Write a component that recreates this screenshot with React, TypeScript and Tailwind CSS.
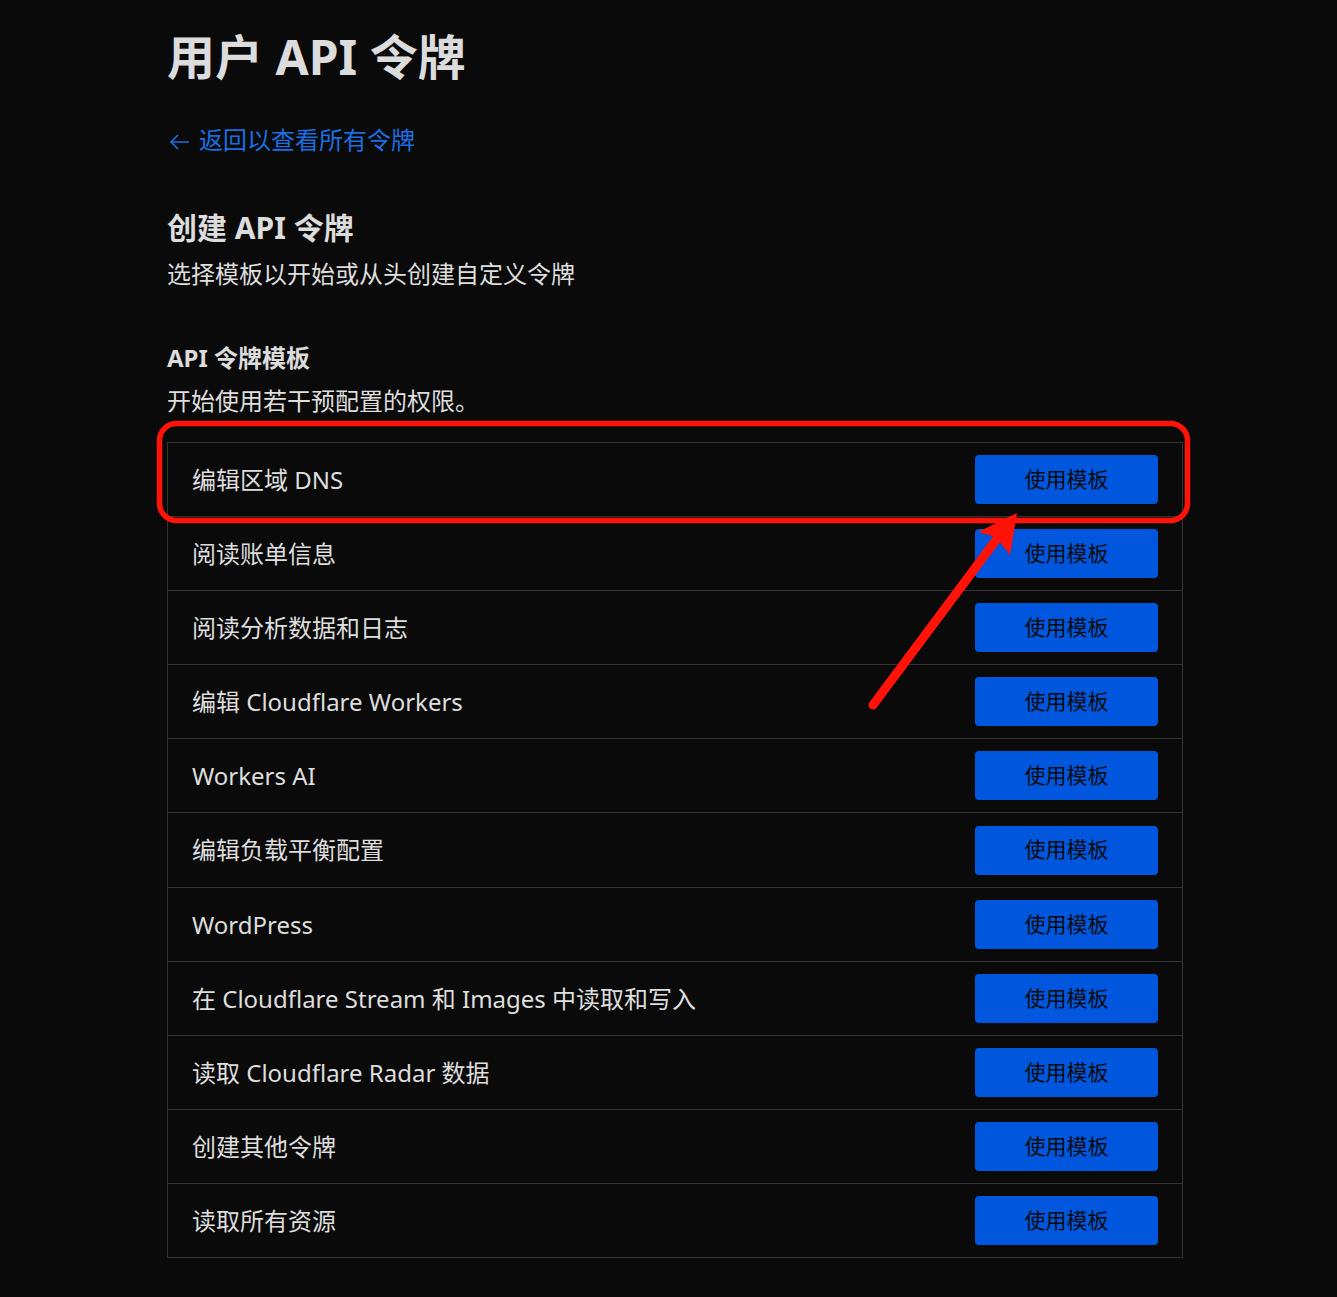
import React from 'react';

const templates = [
  '编辑区域 DNS',
  '阅读账单信息',
  '阅读分析数据和日志',
  '编辑 Cloudflare Workers',
  'Workers AI',
  '编辑负载平衡配置',
  'WordPress',
  '在 Cloudflare Stream 和 Images 中读取和写入',
  '读取 Cloudflare Radar 数据',
  '创建其他令牌',
  '读取所有资源',
];

const font = { fontFamily: '"Noto Sans", "Noto Sans CJK SC", sans-serif' };

export default function App() {
  return (
    <div className="relative min-h-[1297px] w-full bg-[#0a0a0a] text-[#dedede]" style={font}>
      <div className="ml-[167px] w-[1016px] pt-[28px]">
        <h1 className="text-[48px] font-bold leading-[58px] text-[#dcdcdc]">用户 API 令牌</h1>

        <a href="#" className="mt-[38px] flex items-center gap-[9px] text-[24px] leading-[32px] text-[#1c6fe3]">
          <svg width="21" height="18" viewBox="0 0 21 18" fill="none" stroke="currentColor" strokeWidth="1.6" className="ml-[2px] mt-[3px]">
            <path d="M20 9H2M9 2L2 9l7 7" />
          </svg>
          返回以查看所有令牌
        </a>

        <h2 className="mt-[54px] text-[30px] font-bold leading-[36px] text-[#dcdcdc]">创建 API 令牌</h2>
        <p className="mt-[12px] text-[24px] leading-[32px]">选择模板以开始或从头创建自定义令牌</p>

        <h3 className="mt-[52px] text-[24px] font-bold leading-[32px] text-[#dcdcdc]">API 令牌模板</h3>
        <p className="mt-[11px] text-[24px] leading-[32px]">开始使用若干预配置的权限。</p>

        <div className="mt-[25px] border border-[#333333]">
          {templates.map((name, i) => (
            <div
              key={i}
              className={`flex items-center justify-between pl-[24px] pr-[24px] box-content ${i === 5 ? 'h-[74px]' : 'h-[73px]'} ${i < templates.length - 1 ? 'border-b border-[#333333]' : ''}`}
            >
              <span className="text-[24px] leading-[32px] text-[#dedede]">{name}</span>
              <button className="h-[49px] w-[183px] rounded-[4px] bg-[#0056dd] text-[21px] text-[#0a0a0a]">使用模板</button>
            </div>
          ))}
        </div>
      </div>

      {/* annotation */}
      <svg className="pointer-events-none absolute left-0 top-0" width="1337" height="1297" viewBox="0 0 1337 1297" fill="none">
        <rect x="159.5" y="423.5" width="1028" height="97" rx="17" stroke="#ff1208" strokeWidth="5.5" />
        <path d="M873 705L999 536" stroke="#ff1208" strokeWidth="9" strokeLinecap="round" />
        <path d="M1017 513L978 532L996 537L1010 555Z" fill="#ff1208" />
      </svg>
    </div>
  );
}
